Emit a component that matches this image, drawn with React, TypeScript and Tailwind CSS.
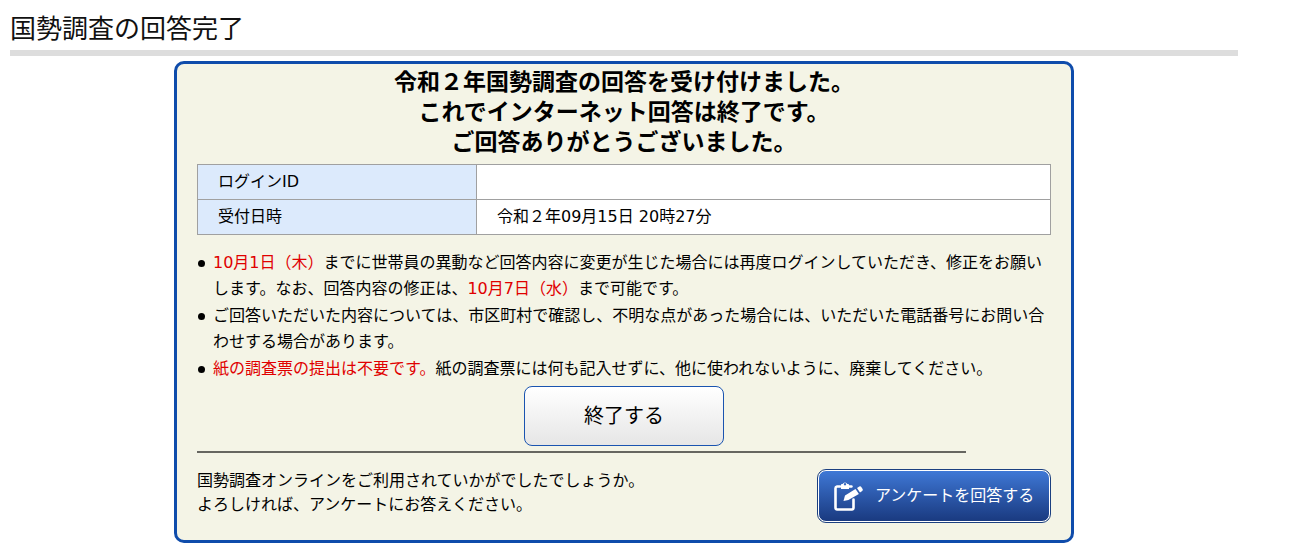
function Dot() {
  return (
    <span className="w-[16px] shrink-0 flex items-start">
      <span className="mt-[10px] ml-[1px] w-[7px] h-[7px] rounded-full bg-black block" />
    </span>
  );
}

export default function App() {
  return (
    <div className="w-[1310px] h-[547px] overflow-hidden bg-white text-black font-['DejaVu_Sans','Noto_Sans_CJK_JP','Noto_Sans',sans-serif]">
      <div className="ml-[10px] w-[1228px]">
        <h1 className="h-[50px] pt-[9px] text-[26px] leading-[36px] font-normal text-[#111] font-['Noto_Sans_CJK_JP',sans-serif]">国勢調査の回答完了</h1>
        <div className="h-[6px] bg-[#dddddd]" />
      </div>
      <div className="mt-[5px] ml-[174px] w-[900px] h-[482px] border-[3px] border-[#0f4cab] rounded-[10px] bg-[#f4f4e6] px-[20px] pt-[1px]">
        <div className="text-center text-[23px] leading-[30px] font-bold font-['Noto_Sans_CJK_JP',sans-serif]">
          <p>令和２年国勢調査の回答を受け付けました。</p>
          <p>これでインターネット回答は終了です。</p>
          <p>ご回答ありがとうございました。</p>
        </div>
        <div className="mt-[9px] border border-[#a0a0a0] text-[16px] leading-[24px]">
          <div className="flex h-[35px] border-b border-[#a0a0a0]">
            <div className="w-[279px] bg-[#dceafc] pl-[20px] flex items-center border-r border-[#a0a0a0]">ログインID</div>
            <div className="flex-1 bg-white" />
          </div>
          <div className="flex h-[34px]">
            <div className="w-[279px] bg-[#dceafc] pl-[20px] flex items-center border-r border-[#a0a0a0]">受付日時</div>
            <div className="flex-1 bg-white pl-[20px] flex items-center">令和２年09月15日 20時27分</div>
          </div>
        </div>
        <ul className="mt-[15px] text-[16px] leading-[26px]">
          <li className="flex">
            <Dot />
            <span><span className="text-[#e00000]">10月1日（木）</span>までに世帯員の異動など回答内容に変更が生じた場合には再度ログインしていただき、修正をお願いします。なお、回答内容の修正は、<span className="text-[#e00000]">10月7日（水）</span>まで可能です。</span>
          </li>
          <li className="flex mt-[1px]">
            <Dot />
            <span>ご回答いただいた内容については、市区町村で確認し、不明な点があった場合には、いただいた電話番号にお問い合わせする場合があります。</span>
          </li>
          <li className="flex mt-[1px]">
            <Dot />
            <span><span className="text-[#e00000]">紙の調査票の提出は不要です。</span>紙の調査票には何も記入せずに、他に使われないように、廃棄してください。</span>
          </li>
        </ul>
        <div className="mt-[4px] flex justify-center">
          <button className="w-[200px] h-[60px] rounded-[8px] border border-[#1a54b0] bg-gradient-to-b from-white to-[#e6e6e6] text-[20px] leading-[28px]">終了する</button>
        </div>
        <div className="mt-[5px] h-[2px] w-[769px] bg-[#666660]" />
        <div className="mt-[17px] flex items-start justify-between">
          <div className="text-[16px] leading-[24px] -mt-[1px]">
            <p>国勢調査オンラインをご利用されていかがでしたでしょうか。</p>
            <p>よろしければ、アンケートにお答えください。</p>
          </div>
          <button className="mr-[1px] w-[232px] h-[52px] rounded-[8px] border border-white outline outline-1 outline-[#1b3f80] bg-gradient-to-b from-[#3f78d6] to-[#1a3a80] text-white text-[16px] flex items-center pl-[14px] gap-[11px]">
            <svg width="31" height="32" viewBox="0 0 31 32" fill="none">
              <path d="M7 6.5H4A1.8 1.8 0 0 0 2.5 8.3V27.7A1.8 1.8 0 0 0 4 29.5h15A1.8 1.8 0 0 0 20.5 27.7V19.5" stroke="white" strokeWidth="2.6" strokeLinecap="round" />
              <path d="M15.5 6.5h3" stroke="white" strokeWidth="2.4" strokeLinecap="round" />
              <path fillRule="evenodd" d="M8 9V4.5a1 1 0 0 1 1-.4h.6a2.6 2.6 0 0 1 4.8 0h.6a1 1 0 0 1 1 .4V9zM12 3a1.2 1.2 0 1 0 .01 0z" fill="white" />
              <path d="M10.5 21l1.5-5.5L22.5 9l3.4 5-10.5 6z" fill="white" />
              <path d="M24 8l2.3-1.5a1.5 1.5 0 0 1 2 .4l1.3 2a1.5 1.5 0 0 1-.4 2L27 12.5z" fill="white" />
            </svg>
            <span>アンケートを回答する</span>
          </button>
        </div>
      </div>
    </div>
  );
}
